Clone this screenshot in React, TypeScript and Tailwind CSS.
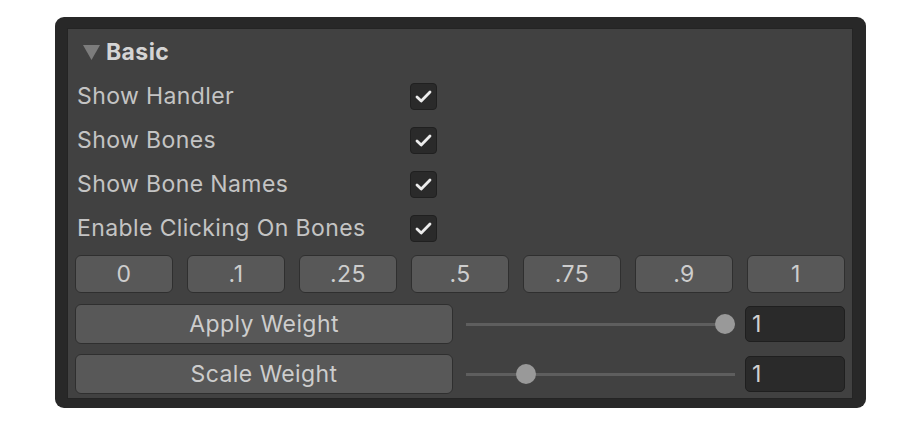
import React from 'react';

const toggles = ['Show Handler', 'Show Bones', 'Show Bone Names', 'Enable Clicking On Bones'];
const presets = ['0', '.1', '.25', '.5', '.75', '.9', '1'];

const Check = () => (
  <div className="w-[27px] h-[27px] rounded-[4px] bg-[#2a2a2a] border border-[#202020] flex items-center justify-center">
    <svg width="21" height="21" viewBox="0 0 21 21" fill="none">
      <path d="M4 11l4.2 4L17 6" stroke="#ececec" strokeWidth="2.8" strokeLinecap="round" strokeLinejoin="round" />
    </svg>
  </div>
);

const SliderRow = ({ label, value }: { label: string; value: number }) => (
  <div className="flex items-center h-[40px]">
    <button className="w-[378px] h-[40px] shrink-0 rounded-[6px] bg-[#585858] border border-[#2f2f2f] text-[23px] tracking-[0.4px] text-[#cdcdcd]">
      {label}
    </button>
    <div className="flex-1 pl-[13px] pr-[10px] h-full flex items-center">
      <div className="relative w-full h-[3px] bg-[#5e5e5e]">
        <div
          className="absolute top-1/2 w-[20px] h-[20px] -mt-[10px] -ml-[10px] rounded-full bg-[#999999]"
          style={{ left: `calc(10px + (100% - 20px) * ${value})` }}
        />
      </div>
    </div>
    <div className="w-[100px] h-[36px] shrink-0 rounded-[5px] bg-[#2a2a2a] border border-[#1f1f1f] flex items-center pl-[6px] text-[23px] text-[#d2d2d2]">
      1
    </div>
  </div>
);

export default function App() {
  return (
    <div className="w-[920px] h-[428px] bg-white pt-[17px] pl-[55px]" style={{ fontFamily: 'Inter, "Noto Sans", sans-serif' }}>
      <div className="w-[811px] h-[391px] rounded-[9px] bg-[#282828] pt-[11px] pl-[12px] pr-[13px] pb-[9px]">
        <div className="h-full bg-[#414141] border border-[#242424] px-[7px] flex flex-col">
          {/* Header */}
          <div className="h-[45px] flex items-center pl-[8px] gap-[6px] pt-[1px]">
            <svg width="17" height="15" viewBox="0 0 17 15">
              <path d="M0 0h17L8.5 15z" fill="#7c7c7c" />
            </svg>
            <span className="text-[23px] tracking-[0.4px] font-bold text-[#d4d4d4]">Basic</span>
          </div>

          {/* Toggles */}
          {toggles.map((t) => (
            <div key={t} className="h-[44px] flex items-center">
              <span className="w-[335px] pl-[2px] text-[23px] tracking-[0.4px] text-[#c4c4c4]">{t}</span>
              <Check />
            </div>
          ))}

          {/* Preset buttons */}
          <div className="mt-[5px] grid grid-cols-7 gap-[14px] h-[38px]">
            {presets.map((p) => (
              <button key={p} className="rounded-[6px] bg-[#585858] border border-[#2f2f2f] text-[23px] tracking-[0.4px] text-[#cdcdcd]">
                {p}
              </button>
            ))}
          </div>

          <div className="mt-[11px] flex flex-col gap-[10px]">
            <SliderRow label="Apply Weight" value={1} />
            <SliderRow label="Scale Weight" value={0.2} />
          </div>
        </div>
      </div>
    </div>
  );
}
